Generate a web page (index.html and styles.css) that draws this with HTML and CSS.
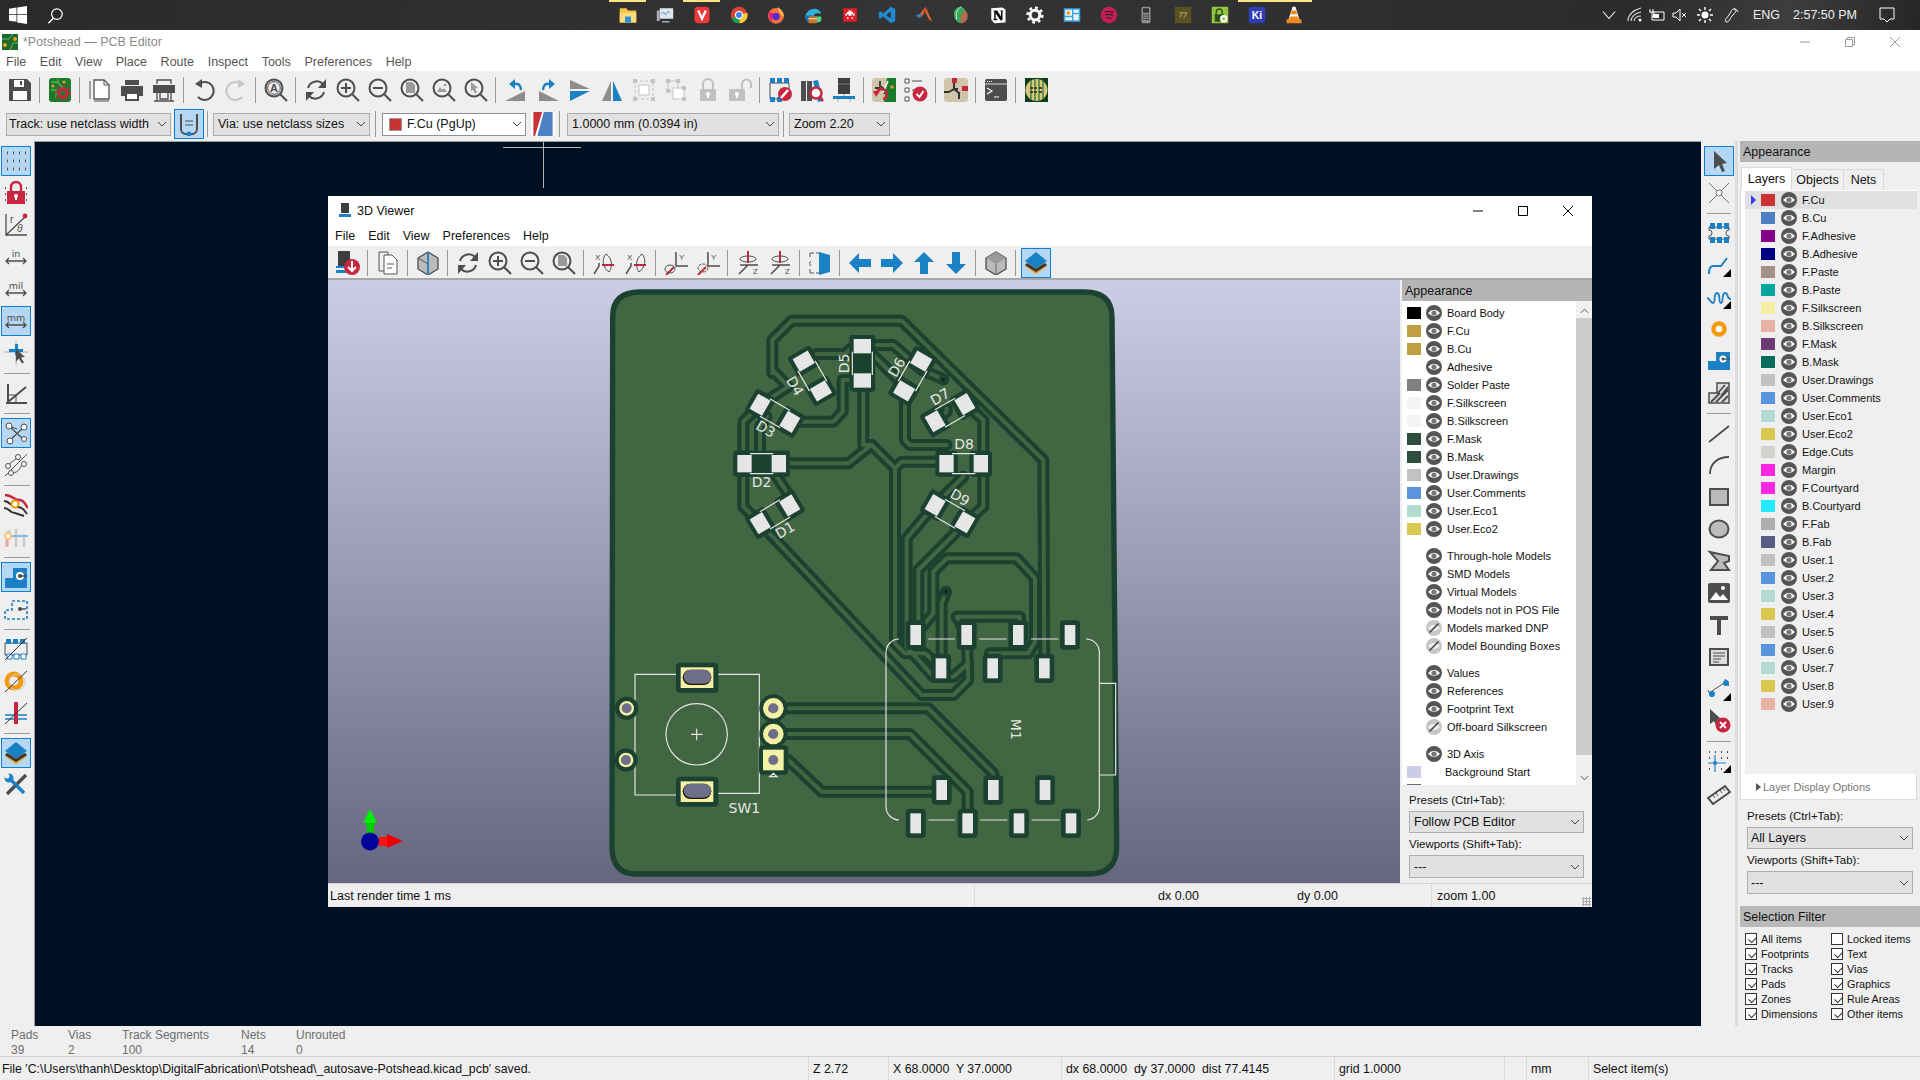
FILE: index.html
```html
<!DOCTYPE html>
<html lang="en">
<head>
<meta charset="utf-8">
<title>Potshead — PCB Editor</title>
<link rel="stylesheet" href="styles.css">
</head>
<body>
<svg class="defs" width="0" height="0" aria-hidden="true">
<defs>
<symbol id="track-ic" viewBox="0 0 24 24"><path d="M4 2v15a5 5 0 0 0 5 5h6a5 5 0 0 0 5-5V2" fill="none" stroke="#4d4d4d" stroke-width="2"/><path d="M8 9h8M8 13h8" stroke="#4d4d4d"/><circle cx="12" cy="22" r="2.500" fill="#1a81c4"/></symbol>
<symbol id="save" viewBox="0 0 24 24"><path fill="#4d4d4d" d="M1 1h18l4 4v18H1z"/><path fill="#fff" d="M6 2h10v7H6zM5 13h14v9H5z"/><path fill="#4d4d4d" d="M12 3h2v4h-2z"/></symbol>
<symbol id="setup" viewBox="0 0 24 24"><rect x="1" width="22" height="24" rx="3" fill="#187a2b"/><path d="M3 4h6l6 6M10 1v3M3 12h5v8" fill="none" stroke="#5fb05f" stroke-width="1.3"/><circle cx="5" cy="8" r="1.6" fill="#e3a21a"/><circle cx="16" cy="4" r="1.6" fill="#e3a21a"/><circle cx="15" cy="15" r="4" fill="none" stroke="#c8263f" stroke-width="3"/><circle cx="15" cy="15" r="7" fill="none" stroke="#c8263f" stroke-width="2" stroke-dasharray="2.4 3"/></symbol>
<symbol id="page" viewBox="0 0 24 24"><path d="M6 2h10l5 5v14H6z" fill="#fff" stroke="#555" stroke-width="1.3"/><path d="M16 2v5h5M2 3v18M6 23h15" fill="none" stroke="#555"/></symbol>
<symbol id="print" viewBox="0 0 24 24"><path fill="#4d4d4d" d="M5 2h14v5H5zM1 8h22v10h-4v-4H5v4H1z"/><path d="M6 15h12v7H6z" fill="#fff" stroke="#4d4d4d" stroke-width="2"/></symbol>
<symbol id="plot" viewBox="0 0 24 24"><path fill="#4d4d4d" d="M1 7h22v8H1z"/><path d="M5 6V2h14v4M5 15v8M19 15v8M2 23h20M8 15v6h8v-6" fill="none" stroke="#4d4d4d" stroke-width="1.3"/></symbol>
<symbol id="undo" viewBox="0 0 24 24"><path d="M7 6a9 9 0 1 1-1 13" fill="none" stroke="#4d4d4d" stroke-width="2"/><path d="M10 1v9L3 6z" fill="#4d4d4d"/></symbol>
<symbol id="redo" viewBox="0 0 24 24"><path d="M17 6a9 9 0 1 0 1 13" fill="none" stroke="#c6c6c6" stroke-width="2"/><path d="M14 1v9l7-4z" fill="#c6c6c6"/></symbol>
<symbol id="mag" viewBox="0 0 24 24"><circle cx="10" cy="10" r="8.5" fill="none" stroke="#4d4d4d" stroke-width="2"/><path d="M16 16l7 7" stroke="#4d4d4d" stroke-width="2"/></symbol>
<symbol id="find" viewBox="0 0 24 24"><use href="#mag"/><circle cx="10" cy="10" r="6.3" fill="none" stroke="#4d4d4d"/><text x="10" y="14" class="it it-find">A</text></symbol>
<symbol id="refresh" viewBox="0 0 24 24"><path d="M4 10a9 9 0 0 1 15-4M20 14a9 9 0 0 1-15 4" fill="none" stroke="#4d4d4d" stroke-width="2"/><path d="M22 1v9h-8zM2 23v-9h8z" fill="#4d4d4d"/></symbol>
<symbol id="zin" viewBox="0 0 24 24"><use href="#mag"/><path d="M10 5v10M5 10h10" stroke="#4d4d4d" stroke-width="2"/></symbol>
<symbol id="zout" viewBox="0 0 24 24"><use href="#mag"/><path d="M5 10h10" stroke="#4d4d4d" stroke-width="2"/></symbol>
<symbol id="zfit" viewBox="0 0 24 24"><use href="#mag"/><path d="M6 4h6l3 3v8H6z" fill="#9a9a9a"/></symbol>
<symbol id="zobj" viewBox="0 0 24 24"><use href="#mag"/><path d="M5 14l3-5 2 3 2-2 3 4z" fill="#9a9a9a"/><circle cx="13" cy="7" r="1.3" fill="#9a9a9a"/></symbol>
<symbol id="zsel" viewBox="0 0 24 24"><use href="#mag"/><path d="M7 4l7 6-3 .6 2 4-2 .8-2-4-2 2z" fill="#9a9a9a"/></symbol>
<symbol id="rccw" viewBox="0 0 24 24"><path d="M1 23l20-10v10z" fill="#8d8d8d"/><path d="M17 12C17 7 14 5 10 6" fill="none" stroke="#1a81c4" stroke-width="2.4"/><path d="M11 1L5 6l6 5z" fill="#1a81c4"/></symbol>
<symbol id="rcw" viewBox="0 0 24 24"><path d="M23 23L3 13v10z" fill="#8d8d8d"/><path d="M7 12c0-5 3-7 7-6" fill="none" stroke="#1a81c4" stroke-width="2.4"/><path d="M13 1l6 5-6 5z" fill="#1a81c4"/></symbol>
<symbol id="flip" viewBox="0 0 24 24"><path d="M2 2l20 9H2z" fill="#8d8d8d"/><path d="M2 13h20L2 23z" fill="#1a81c4"/></symbol>
<symbol id="mirror" viewBox="0 0 24 24"><path d="M11 3L2 23h9z" fill="#8d8d8d"/><path d="M13 3v20h9z" fill="#1a81c4"/></symbol>
<symbol id="grp" viewBox="0 0 24 24"><path d="M3 3h18v18H3z" fill="none" stroke="#c4c4c4" stroke-dasharray="3 2"/><rect x="7" y="7" width="10" height="10" fill="#fff" stroke="#c4c4c4"/><path d="M1 1h4v4H1zM19 1h4v4h-4zM1 19h4v4H1zM19 19h4v4h-4z" fill="#c4c4c4"/></symbol>
<symbol id="ungrp" viewBox="0 0 24 24"><path d="M4 3h10v10H4z" fill="none" stroke="#c4c4c4"/><rect x="9" y="10" width="11" height="11" fill="#fff" stroke="#c4c4c4"/><path d="M2 1h4v4H2zM12 1h4v4h-4zM2 11h4v4H2zM18 8h4v4h-4zM18 19h4v4h-4z" fill="#c4c4c4"/></symbol>
<symbol id="lock" viewBox="0 0 24 24"><path d="M7 11V6a5 5 0 0 1 10 0v5" fill="none" stroke="#c0c0c0" stroke-width="2"/><path d="M4 11h16v12H4z" fill="#c0c0c0"/><circle cx="12" cy="16" r="2" fill="#fff"/><path d="M11 16h2v4h-2z" fill="#fff"/></symbol>
<symbol id="unlock" viewBox="0 0 24 24"><path d="M14 11V6a4.500 4.500 0 0 1 9 0v4" fill="none" stroke="#c0c0c0" stroke-width="2"/><path d="M1 11h16v12H1z" fill="#c0c0c0"/><circle cx="9" cy="16" r="2" fill="#fff"/><path d="M8 16h2v4H8z" fill="#fff"/></symbol>
<symbol id="fped" viewBox="0 0 24 24"><path d="M2 5h19v16H2z" fill="none" stroke="#4d4d4d"/><path d="M2 0h5v5H2zM9 0h5v5H9zM16 0h5v5h-5zM2 19h5v5H2zM9 19h5v5H9z" fill="#1a81c4"/><circle cx="17" cy="16" r="7" fill="#c8263f"/><path d="M13 20l7-8" stroke="#fff" stroke-width="2.500"/></symbol>
<symbol id="lib" viewBox="0 0 24 24"><path d="M1 3h5v20H1zM7 3h5v20H7z" fill="#4d4d4d"/><path d="M13 3l5-1 5 21-5 1z" fill="#1a81c4"/><circle cx="16" cy="15" r="5.500" fill="#fff" stroke="#c8263f" stroke-width="2.500"/><path d="M20 19l3 4" stroke="#c8263f" stroke-width="2.500"/></symbol>
<symbol id="chip3d" viewBox="0 0 24 24"><path d="M6 0h12v16H6z" fill="#3d3d3d"/><path d="M6 6h12" stroke="#777"/><path d="M1 18h22v3H1z" fill="#1a81c4"/><path d="M6 21v3M18 21v3M12 16v2" stroke="#aaa"/></symbol>
<symbol id="netup" viewBox="0 0 24 24"><rect width="24" height="24" rx="3" fill="#d0c5a8"/><path d="M15 0h9v24H12z" fill="#187a2b"/><path d="M8 3v5l4 3v5M3 10h5" stroke="#333" stroke-width="1.800" fill="none"/><path d="M16 3l-5 12" stroke="#fff" stroke-width="1.500"/><circle cx="20" cy="9" r="1.800" fill="#e3a21a"/><path d="M11 21a5 5 0 1 0-6-6" fill="none" stroke="#c8263f" stroke-width="2.500"/><path d="M1 13h7l-4 6z" fill="#c8263f"/></symbol>
<symbol id="check" viewBox="0 0 24 24"><path d="M1 1h4v4H1zM1 10h4v4H1zM1 19h4v4H1z" fill="#fff" stroke="#4d4d4d"/><path d="M8 3h10M8 12h3" stroke="#4d4d4d"/><circle cx="16" cy="16" r="7.500" fill="#c8263f"/><path d="M12.500 16l3 3 4-6" fill="none" stroke="#fff" stroke-width="2"/></symbol>
<symbol id="sch" viewBox="0 0 24 24"><rect width="24" height="24" rx="3" fill="#d0c5a8"/><path d="M10 5v6l-5 3M10 11l5 4v6M0 14h5M10 11h4" stroke="#333" stroke-width="2" fill="none"/><path d="M8 0h5v5H8zM18 8h6v5h-6z" fill="#c8263f"/></symbol>
<symbol id="term" viewBox="0 0 24 24"><rect x="1" y="1" width="22" height="22" rx="2" fill="#4d4d4d"/><path d="M1 6h22" stroke="#fff" stroke-width=".8"/><path d="M3 3.500h1M5 3.500h1M7 3.500h1" stroke="#fff"/><path d="M3 10l5 3-5 3M10 19h5" fill="none" stroke="#fff" stroke-width="1.200"/></symbol>
<symbol id="pat" viewBox="0 0 24 24"><rect x="1" width="23" height="24" fill="#0f3d1f"/><circle cx="12.500" cy="12" r="11" fill="#d6c77c"/><path d="M7 2v20M11 1v22M15 1v22M19 3v18" stroke="#3f7f3f" stroke-width="1.400"/><path d="M6 10h3M10 10h3M15 10h3M6 14h3M10 14h3M15 14h3" stroke="#222" stroke-width="1.400"/></symbol>

<symbol id="grid" viewBox="0 0 24 24"><path d="M3 4h1M9 4h1M15 4h1M21 4h1M3 12h1M9 12h1M15 12h1M21 12h1M3 20h1M9 20h1M15 20h1M21 20h1" stroke="#555" stroke-width="3" /></symbol>
<symbol id="gridlock" viewBox="0 0 24 24"><path d="M1 7h1M22 7h1M1 13h1M22 13h1M1 19h1M22 19h1" stroke="#555" stroke-width="2"/><path d="M7 10V6a5 5 0 0 1 10 0v4" fill="none" stroke="#c8263f" stroke-width="2.400"/><path d="M3 10h18v13H3z" fill="#c8263f"/><circle cx="12" cy="15" r="2" fill="#fff"/><path d="M11 15h2v4h-2z" fill="#fff"/></symbol>
<symbol id="polar" viewBox="0 0 24 24"><path d="M2 1v21h21M2 22L21 4" fill="none" stroke="#4d4d4d" stroke-width="1.300"/><circle cx="21" cy="3" r="2.400" fill="#c8263f"/><text x="6" y="10" class="it it-s">r</text><text x="13" y="19" class="it it-s it-i">θ</text></symbol>
<symbol id="uin" viewBox="0 0 24 24"><text x="12" y="12" class="it it-u">in</text><path d="M2 16h20M5 13l-3 3 3 3M19 13l3 3-3 3" fill="none" stroke="#4d4d4d" stroke-width="1.300"/></symbol>
<symbol id="umil" viewBox="0 0 24 24"><text x="12" y="12" class="it it-u">mil</text><path d="M2 16h20M5 13l-3 3 3 3M19 13l3 3-3 3" fill="none" stroke="#4d4d4d" stroke-width="1.300"/></symbol>
<symbol id="umm" viewBox="0 0 24 24"><text x="12" y="12" class="it it-u">mm</text><path d="M2 16h20M5 13l-3 3 3 3M19 13l3 3-3 3" fill="none" stroke="#4d4d4d" stroke-width="1.300"/></symbol>
<symbol id="cross" viewBox="0 0 24 24"><path d="M12 0v24M0 11h24" stroke="#aaa"/><path d="M11 3h3v5h5v3h-5v3h-3v-3H5V8h6z" fill="#1a81c4"/><path d="M12 8l9 8-4 .6 3 5-2 1-3-5-3 3z" fill="#4d4d4d"/></symbol>
<symbol id="angle" viewBox="0 0 24 24"><path d="M2 22h21M4 23V3M4 21L22 6" fill="none" stroke="#4d4d4d" stroke-width="2"/><path d="M4 14h8v8" fill="none" stroke="#4d4d4d"/></symbol>
<symbol id="rats" viewBox="0 0 24 24"><path d="M5 5l15 14M5 20L20 6M5 5l8 3" stroke="#4d4d4d" stroke-width="1.200"/><g fill="#fff" stroke="#4d4d4d"><circle cx="5" cy="5" r="3"/><circle cx="20" cy="6" r="3"/><circle cx="6" cy="20" r="3"/><circle cx="20" cy="18" r="2.500"/></g></symbol>
<symbol id="rats2" viewBox="0 0 24 24"><path d="M1 23L23 1" stroke="#4d4d4d"/><path d="M4 12l9-7M8 20c8 0 8-8 12-9" fill="none" stroke="#4d4d4d"/><g fill="#fff" stroke="#4d4d4d"><circle cx="4" cy="13" r="2.500"/><circle cx="14" cy="4" r="2.500"/><circle cx="7" cy="20" r="2.500"/><circle cx="20" cy="11" r="2.500"/></g></symbol>
<symbol id="hilite" viewBox="0 0 24 24"><path d="M1 2c8 0 8 5 14 5s6 5 9 8" fill="none" stroke="#c8263f" stroke-width="2.500"/><path d="M0 8c6 0 7 6 12 6s7 1 11 7M0 15c6 0 5 5 11 5l9 3" fill="none" stroke="#333" stroke-width="2"/><circle cx="11" cy="11" r="3.500" fill="#fff" stroke="#f39a0b" stroke-width="2"/></symbol>
<symbol id="contrast" viewBox="0 0 24 24"><path d="M3 22V10c0-3 2-4 4-4M12 22V4M20 22V9" fill="none" stroke="#ccc" stroke-width="2.600"/><path d="M8 11h16" stroke="#8cb9dc" stroke-width="2"/><path d="M3 22v-7" stroke="#eaa" stroke-width="3"/><circle cx="4" cy="11" r="3" fill="#fff" stroke="#f5c47a" stroke-width="2"/></symbol>
<symbol id="padfill" viewBox="0 0 24 24"><path d="M1 23V13h8V3h14v20z" fill="#1a81c4"/><circle cx="16" cy="11" r="4" fill="#fff"/><circle cx="16" cy="11" r="2" fill="#4d4d4d"/><path d="M16 11h7" stroke="#4d4d4d" stroke-width="1.500"/></symbol>
<symbol id="padline" viewBox="0 0 24 24"><path d="M1 22V13h7V4h15v18z" fill="none" stroke="#1a81c4" stroke-width="1.600" stroke-dasharray="3 2"/><circle cx="16" cy="12" r="2" fill="#4d4d4d"/><path d="M16 12h6" stroke="#4d4d4d" stroke-width="1.500"/></symbol>
<symbol id="fpline" viewBox="0 0 24 24"><path d="M1 6h22v12H1z" fill="none" stroke="#4d4d4d"/><path d="M2 2h5v5H2zM9 2h5v5H9zM16 2h5v5h-5z" fill="#1a81c4"/><path d="M3 17h5v5H3zM10 17h5v5h-5zM17 17h5v5h-5z" fill="#fff" stroke="#1a81c4"/><path d="M1 23L23 1" stroke="#333"/></symbol>
<symbol id="viasl" viewBox="0 0 24 24"><circle cx="10" cy="12" r="7" fill="none" stroke="#f39a0b" stroke-width="5"/><circle cx="13" cy="13" r="8" fill="none" stroke="#ccc"/><path d="M1 23L23 2" stroke="#333"/></symbol>
<symbol id="trsl" viewBox="0 0 24 24"><path d="M1 14h22M1 18h22" stroke="#1a81c4" stroke-width="1.500"/><path d="M12 1v22" stroke="#c8263f" stroke-width="4"/><path d="M1 23L23 2" stroke="#333"/></symbol>
<symbol id="layers" viewBox="0 0 24 24"><path d="M12 7l11 8-11 8L1 15z" fill="#f39a0b"/><path d="M12 1l11 9-11 8L1 10z" fill="#1a81c4"/><path d="M3 12l9 6 9-6 2 2-11 7-11-7z" fill="#333"/></symbol>
<symbol id="tools" viewBox="0 0 24 24"><path d="M22 2L3 21" stroke="#4d4d4d" stroke-width="3.400"/><path d="M3 3l17 17" stroke="#1a81c4" stroke-width="3.400"/><circle cx="5" cy="5" r="4.500" fill="#1a81c4"/><circle cx="3" cy="3" r="2.500" fill="#efefef"/></symbol>

<symbol id="pointer" viewBox="0 0 24 24"><path d="M7 2l13 12-5 1 3 7-3 1-3-7-5 4z" fill="#4d4d4d"/></symbol>
<symbol id="xhair" viewBox="0 0 24 24"><path d="M2 2l20 20M22 2L2 22" stroke="#777"/><circle cx="12" cy="12" r="3" fill="#fff" stroke="#777"/></symbol>
<symbol id="tri" viewBox="0 0 24 24"><path d="M24 16v8h-8z" fill="#000"/></symbol>
<symbol id="fp" viewBox="0 0 24 24"><path d="M2 6h20v3a3 3 0 0 0 0 6v3H2v-3a3 3 0 0 0 0-6z" fill="none" stroke="#4d4d4d"/><path d="M3 2h5v6H3zM10 2h5v6h-5zM17 2h5v6h-5zM3 16h5v6H3zM10 16h5v6h-5zM17 16h5v6h-5z" fill="#1a81c4"/></symbol>
<symbol id="route" viewBox="0 0 24 24"><path d="M2 21c0-6 1-8 5-8h7l6-8" fill="none" stroke="#1a81c4" stroke-width="2"/><use href="#tri"/></symbol>
<symbol id="mean" viewBox="0 0 24 24"><path d="M0 13c3 0 3 5 6 5s0-10 4-10 1 10 4 10 0-10 4-10 1 6 6 6" fill="none" stroke="#1a81c4" stroke-width="1.800"/><use href="#tri"/></symbol>
<symbol id="via" viewBox="0 0 24 24"><circle cx="12" cy="12" r="5.500" fill="#fff" stroke="#f39a0b" stroke-width="4.500"/></symbol>
<symbol id="zonepad" viewBox="0 0 24 24"><path d="M1 21V12h8V3h14v18z" fill="#1a81c4"/><circle cx="16" cy="10" r="3.500" fill="#fff"/><circle cx="16" cy="10" r="1.500" fill="#4d4d4d"/><path d="M16 10h7" stroke="#4d4d4d" stroke-width="1.300"/></symbol>
<symbol id="hatch" viewBox="0 0 24 24"><path d="M2 22V12h8V2h12v20z" fill="#ddd" stroke="#4d4d4d" stroke-width="1.500"/><path d="M4 21l9-9M9 21l12-12M15 21l6-6M10 13l8-9M14 15l7-9" stroke="#4d4d4d" stroke-width="1.800"/></symbol>
<symbol id="line" viewBox="0 0 24 24"><path d="M2 21L22 5" stroke="#4d4d4d" stroke-width="1.800"/></symbol>
<symbol id="arc" viewBox="0 0 24 24"><path d="M3 21C3 11 10 4 22 4" fill="none" stroke="#4d4d4d" stroke-width="1.800"/></symbol>
<symbol id="rect" viewBox="0 0 24 24"><rect x="3" y="4" width="18" height="16" fill="#bbb" stroke="#4d4d4d" stroke-width="2"/></symbol>
<symbol id="circ" viewBox="0 0 24 24"><ellipse cx="12" cy="12" rx="9.500" ry="8.500" fill="#bbb" stroke="#4d4d4d" stroke-width="2"/></symbol>
<symbol id="poly" viewBox="0 0 24 24"><path d="M3 3L22 7v5l-5 2 5 7H4l7-9z" fill="#bbb" stroke="#4d4d4d" stroke-width="2"/></symbol>
<symbol id="img" viewBox="0 0 24 24"><rect x="1" y="2" width="22" height="20" rx="2" fill="#4d4d4d"/><path d="M3 19l6-8 4 5 3-3 5 6z" fill="#fff"/><circle cx="16" cy="7" r="2" fill="#fff"/></symbol>
<symbol id="txt" viewBox="0 0 24 24"><path d="M3 3h18v4h-7v15h-4V7H3z" fill="#4d4d4d"/></symbol>
<symbol id="tbox" viewBox="0 0 24 24"><rect x="3" y="4" width="18" height="16" fill="#ddd" stroke="#4d4d4d" stroke-width="2"/><path d="M6 8h12M6 11h12M6 14h8M6 17h6" stroke="#4d4d4d"/></symbol>
<symbol id="dim" viewBox="0 0 24 24"><path d="M2 16L20 4M4 20l-3-7M22 9l-4-7" stroke="#4d4d4d"/><circle cx="19" cy="6" r="3" fill="#1a81c4"/><circle cx="5" cy="17" r="3" fill="#1a81c4"/><use href="#tri"/></symbol>
<symbol id="del" viewBox="0 0 24 24"><path d="M3 0l11 10-4 1 2 6-2 1-3-6-4 3z" fill="#4d4d4d"/><circle cx="16" cy="16" r="7.500" fill="#c8263f"/><path d="M13 13l6 6M19 13l-6 6" stroke="#fff" stroke-width="1.800"/></symbol>
<symbol id="gridor" viewBox="0 0 24 24"><path d="M2 3h1M8 3h1M14 3h1M20 3h1M2 9h1M14 9h1M20 9h1M2 20h1M14 20h1" stroke="#4d4d4d" stroke-width="2"/><path d="M1 14h18M8 6v17" stroke="#1a81c4" stroke-width="1.200"/><circle cx="8" cy="14" r="2" fill="#1a81c4"/><use href="#tri"/></symbol>
<symbol id="ruler" viewBox="0 0 24 24"><path d="M1 17L18 5l5 6L6 23z" fill="none" stroke="#4d4d4d" stroke-width="2"/><path d="M6 14l2 3M9 12l2 3M13 9l2 3M16 7l2 3" stroke="#4d4d4d"/></symbol>

<symbol id="v-save" viewBox="0 0 24 24"><path d="M2 0h12v17H2z" fill="#3d3d3d"/><path d="M0 15h12v2H0zM0 19h14v3H0z" fill="#1a81c4"/><circle cx="16" cy="16" r="8" fill="#c8263f"/><path d="M16 10v10M12 16l4 4 4-4" fill="none" stroke="#fff" stroke-width="2"/></symbol>
<symbol id="v-copy" viewBox="0 0 24 24"><path d="M3 1h9v19H3z" fill="none" stroke="#555"/><path d="M8 4h8l5 5v14H8z" fill="#fff" stroke="#555"/><path d="M11 13h7M11 17h5" stroke="#555"/></symbol>
<symbol id="cube" viewBox="0 0 24 24"><path d="M12 1l10 6v11l-10 6-10-6V7z" fill="#bbb" stroke="#4d4d4d" stroke-width="1.300"/><path d="M12 1v23" stroke="#1a81c4" stroke-width="1.800"/><path d="M2 7l10 6" stroke="#555"/></symbol>
<symbol id="cube2" viewBox="0 0 24 24"><path d="M12 1l10 6v11l-10 6-10-6V7z" fill="#bbb" stroke="#4d4d4d" stroke-width="1.300"/><path d="M12 1l10 6-10 6L2 7z" fill="#999"/><path d="M12 13v11" stroke="#666"/></symbol>
<symbol id="rx1" viewBox="0 0 24 24"><text x="3" y="9" class="it it-a">X</text><path d="M7 12v3L2 23" fill="none" stroke="#4d4d4d" stroke-width="1.500"/><path d="M10 14h12" stroke="#c8263f" stroke-width="2"/><path d="M14 3c-5 5-3 14 3 18 4-6 3-14-3-18z" fill="none" stroke="#4d4d4d"/></symbol>
<symbol id="rx2" viewBox="0 0 24 24"><text x="3" y="9" class="it it-a">X</text><path d="M7 12v3L2 23" fill="none" stroke="#4d4d4d" stroke-width="1.500"/><path d="M10 14h12" stroke="#c8263f" stroke-width="2"/><path d="M18 3c5 5 3 14-3 18-4-6-3-14 3-18z" fill="none" stroke="#4d4d4d"/></symbol>
<symbol id="ry1" viewBox="0 0 24 24"><text x="15" y="9" class="it it-a">Y</text><path d="M12 1v14h12" fill="none" stroke="#4d4d4d" stroke-width="1.500"/><path d="M10 16l-8 8" stroke="#c8263f" stroke-width="2"/><ellipse cx="6" cy="18" rx="5" ry="4" fill="none" stroke="#4d4d4d"/></symbol>
<symbol id="ry2" viewBox="0 0 24 24"><text x="15" y="9" class="it it-a">Y</text><path d="M12 1v14h12" fill="none" stroke="#4d4d4d" stroke-width="1.500"/><path d="M10 16l-8 8" stroke="#c8263f" stroke-width="2"/><ellipse cx="7" cy="17" rx="5" ry="4" fill="none" stroke="#4d4d4d" stroke-dasharray="3 1"/></symbol>
<symbol id="rz1" viewBox="0 0 24 24"><text x="17" y="23" class="it it-a">Z</text><path d="M12 0v12" stroke="#c8263f" stroke-width="2"/><path d="M4 14h18M12 14L3 23" stroke="#4d4d4d" stroke-width="1.500"/><ellipse cx="12" cy="8" rx="8" ry="3" fill="none" stroke="#4d4d4d"/></symbol>
<symbol id="fb" viewBox="0 0 24 24"><path d="M11 1l11 3v17l-11 3z" fill="#1a81c4"/><path d="M2 2h4M2 2v4M2 22h4M2 22v-4M3 10a3 3 0 0 0 0 5" stroke="#555" fill="none"/><path d="M8 2h3M8 22h3" stroke="#555"/></symbol>
<symbol id="al" viewBox="0 0 24 24"><path d="M1 12L11 2v6h12v8H11v6z" fill="#1a81c4"/></symbol>
<symbol id="ar" viewBox="0 0 24 24"><path d="M23 12L13 2v6H1v8h12v6z" fill="#1a81c4"/></symbol>
<symbol id="au" viewBox="0 0 24 24"><path d="M12 1L2 11h6v12h8V11h6z" fill="#1a81c4"/></symbol>
<symbol id="ad" viewBox="0 0 24 24"><path d="M12 23L2 13h6V1h8v12h6z" fill="#1a81c4"/></symbol>

<symbol id="eye" viewBox="0 0 16 16"><circle cx="8" cy="8" r="8" fill="#555"/><path d="M2 8q6-6.500 12 0q-6 6.500-12 0z" fill="#fff"/><circle cx="8" cy="8" r="2.600" fill="#777"/></symbol>
<symbol id="eyeoff" viewBox="0 0 16 16"><circle cx="8" cy="8" r="8" fill="#c6c6c6"/><path d="M2 8q6-6.500 12 0q-6 6.500-12 0z" fill="#eee"/><path d="M3.500 12.500l9-9" stroke="#444" stroke-width="1.600"/></symbol>
<symbol id="chev" viewBox="0 0 10 6"><path d="M1 1l4 4 4-4" fill="none" stroke="#444"/></symbol>

<symbol id="t-win" viewBox="0 0 24 24"><path fill="#fff" d="M0 3.500l10-1.400V11H0zM11 2l13-2v11H11zM0 12h10v9L0 19.600zM11 12h13v12l-13-2z"/></symbol>
<symbol id="t-search" viewBox="0 0 24 24"><circle cx="14" cy="10" r="7.500" fill="none" stroke="#fff" stroke-width="1.800"/><path d="M9 16l-7 7" stroke="#fff" stroke-width="2"/></symbol>
<symbol id="t-exp" viewBox="0 0 24 24"><path d="M1 3h9l2 3h11v16H1z" fill="#f6c344"/><path d="M1 9h22v13H1z" fill="#ffdc7a"/><path d="M8 14h8v8H8z" fill="#2a8fd6"/></symbol>
<symbol id="t-mon" viewBox="0 0 24 24"><path d="M5 3h18v14H5z" fill="#dfe6ee"/><path d="M7 11l3-3 3 4 3-5 3 3" fill="none" stroke="#2d7fc1"/><path d="M1 6h4v14H1zM8 20h10v2H8z" fill="#aab"/></symbol>
<symbol id="t-viv" viewBox="0 0 24 24"><rect x="2" y="1" width="20" height="22" rx="5" fill="#ef3939"/><path d="M7 6l5 11 5-11" fill="none" stroke="#fff" stroke-width="3"/></symbol>
<symbol id="t-chr" viewBox="0 0 24 24"><circle cx="12" cy="12" r="11" fill="#db4437"/><path d="M12 12L2 17a11 11 0 0 0 11 6z" fill="#0f9d58"/><path d="M12 12l11-3a11 11 0 0 1-10 14z" fill="#fcc934"/><circle cx="12" cy="12" r="5.500" fill="#fff"/><circle cx="12" cy="12" r="4" fill="#4285f4"/></symbol>
<symbol id="t-ff" viewBox="0 0 24 24"><circle cx="12" cy="13" r="10.500" fill="#ff7139"/><path d="M15 1c2 4 8 6 7 14-3-4-8-7-7-14z" fill="#ffbd4f"/><path d="M4 8a10 10 0 0 0 5 14c-4-4-3-9 0-11z" fill="#e31587"/><circle cx="12" cy="14" r="5" fill="#592acb"/></symbol>
<symbol id="t-edge" viewBox="0 0 24 24"><path d="M2 14C2 4 20-2 23 11c-4-3-10-1-10 2H2z" fill="#2fb3d9"/><path d="M1 13c0 8 8 11 13 9l-4-9z" fill="#1272b8"/><path d="M10 14h13v6c0 2-13 3-13 0z" fill="#59d08c"/><path d="M6 14h11v9H6z" fill="#c8792a"/><path d="M6 17h11" stroke="#fff"/></symbol>
<symbol id="t-inv" viewBox="0 0 24 24"><path d="M3 3h18v18H3z" fill="#e31c2c"/><path d="M10 6h4v2h2v2h2v3h-2v-2h-2v2h-4v-2H8v2H6v-3h2V8h2zM8 15h2v2H8zM14 15h2v2h-2z" fill="#fff"/></symbol>
<symbol id="t-vs" viewBox="0 0 24 24"><path d="M17 1l6 3v16l-6 3-10-9-4 3-2-1V8l2-1 4 3zM17 7l-6 5 6 5z" fill="#1f8ad2"/></symbol>
<symbol id="t-mat" viewBox="0 0 24 24"><path d="M1 13l6-3 3 3-4 3z" fill="#3b7fc4"/><path d="M7 10l7-9 9 20-5-4-4-9-4 5z" fill="#e16737"/><path d="M14 1l-4 12 4-5z" fill="#a8321d"/></symbol>
<symbol id="t-dav" viewBox="0 0 24 24"><path d="M12 1C5 1 1 7 3 14c1 5 5 9 9 9 0-8 0-14 6-17-2-3-4-5-6-5z" fill="#3aa85a"/><path d="M18 6c3 3 4 8 2 12-2 3-5 5-8 5-1-6 0-14 6-17z" fill="#b86b4f"/><path d="M12 1c-5 3-7 8-6 17" fill="none" stroke="#fff"/></symbol>
<symbol id="t-not" viewBox="0 0 24 24"><path d="M3 3l15-1 4 3v17l-15 1-4-5z" fill="#fff"/><path d="M6 6h5l5 8V7h-1V6h4v1h-1v12h-3l-6-9v7h2v2H6v-2h1V7H6z" fill="#111"/></symbol>
<symbol id="t-gear" viewBox="0 0 24 24"><circle cx="12" cy="12" r="6.500" fill="none" stroke="#fff" stroke-width="4"/><circle cx="12" cy="12" r="10" fill="none" stroke="#fff" stroke-width="3" stroke-dasharray="3.800 4"/></symbol>
<symbol id="t-tile" viewBox="0 0 24 24"><path d="M1 3h22v18H1z" fill="#3da7e6"/><path d="M3 5h9v8H3zM14 5h7v4h-7zM14 11h7v8h-7zM3 15h9v4H3z" fill="#e9f3fa"/><circle cx="7" cy="9" r="2.500" fill="#f39a0b"/></symbol>
<symbol id="t-spo" viewBox="0 0 24 24"><circle cx="12" cy="12" r="11" fill="#c61e54"/><path d="M6 8c4-1 8-1 12 1M7 12c3-1 7-1 10 1M8 16c3-1 5 0 8 1" fill="none" stroke="#222" stroke-width="1.600"/></symbol>
<symbol id="t-calc" viewBox="0 0 24 24"><rect x="6" y="1" width="12" height="22" rx="2" fill="#8e8e8e"/><path d="M8 3h8v6H8z" fill="#333"/><path d="M8 12h2M11 12h2M14 12h2M8 15h2M11 15h2M14 15h2M8 18h2M11 18h2M14 18h2" stroke="#222" stroke-width="1.600"/></symbol>
<symbol id="t-oli" viewBox="0 0 24 24"><path d="M1 1h22v22H1z" fill="#5b5223"/><path d="M7 9h10l-4 7M11 9l-3 6" fill="none" stroke="#a79c60" stroke-width="1.500"/></symbol>
<symbol id="t-lock" viewBox="0 0 24 24"><path d="M1 1h22v22H1z" fill="#8fc73e"/><path d="M7 11V8a4 4 0 0 1 8 0v3" fill="none" stroke="#2f4d1d" stroke-width="1.800"/><path d="M5 11h12v10H5z" fill="#2f4d1d"/><circle cx="17" cy="17" r="5" fill="#fff"/><circle cx="17" cy="17" r="2" fill="#8fc73e"/></symbol>
<symbol id="t-ki" viewBox="0 0 24 24"><rect x="1" y="1" width="22" height="22" rx="4" fill="#2f3fb3"/><text x="12" y="17" class="it it-ki">Ki</text></symbol>
<symbol id="t-vlc" viewBox="0 0 24 24"><path d="M10 1h4l6 19H4z" fill="#f5f5f5"/><path d="M9 6h6l1.500 5h-9zM6.500 14h11l1.500 6H5z" fill="#f08a1d"/><path d="M2 18h20v5H2z" fill="#f08a1d"/></symbol>
<symbol id="t-chv" viewBox="0 0 16 16"><path d="M1 4l7 8 7-8" fill="none" stroke="#fff" stroke-width="1.200"/></symbol>
<symbol id="t-wifi" viewBox="0 0 16 16"><path d="M1 14C1 8 6 3 14 1M4 14c0-4 4-8 10-9M7 14c0-3 3-5 7-5" fill="none" stroke="#ddd" stroke-width="1.100"/><circle cx="13" cy="13" r="1.500" fill="#fff"/></symbol>
<symbol id="t-bat" viewBox="0 0 16 16"><path d="M3 5h12v8H3z" fill="none" stroke="#fff"/><path d="M4 7h6v4H4z" fill="#fff"/><path d="M1 2v3M4 2v3M0 5h5v3l-2 2" fill="none" stroke="#fff"/></symbol>
<symbol id="t-mute" viewBox="0 0 16 16"><path d="M1 6h3l4-4v12l-4-4H1z" fill="none" stroke="#fff"/><path d="M10 6l4 4M14 6l-4 4" stroke="#fff"/></symbol>
<symbol id="t-bright" viewBox="0 0 16 16"><circle cx="8" cy="8" r="3.500" fill="#fff"/><path d="M8 0v3M8 13v3M0 8h3M13 8h3M2 2l2 2M12 12l2 2M14 2l-2 2M2 14l2-2" stroke="#fff" stroke-width="1.400"/></symbol>
<symbol id="t-pen" viewBox="0 0 16 16"><path d="M2 15c-2-2 1-4 3-7s3-7 6-6-1 5-3 7-2 6-6 6zM10 2c2 0 3 1 4 3" fill="none" stroke="#fff"/></symbol>
<symbol id="t-note" viewBox="0 0 16 16"><path d="M1 1h14v11h-4l-3 3-3-3H1z" fill="none" stroke="#fff"/></symbol>
<symbol id="w-min" viewBox="0 0 12 12"><path d="M1 6h10" stroke="currentColor"/></symbol>
<symbol id="w-max" viewBox="0 0 12 12"><path d="M1.500 1.500h9v9h-9z" fill="none" stroke="currentColor"/></symbol>
<symbol id="w-res" viewBox="0 0 12 12"><path d="M1.500 3.500h7v7h-7zM3.500 3V1.500h7v7H9" fill="none" stroke="currentColor"/></symbol>
<symbol id="w-x" viewBox="0 0 12 12"><path d="M1 1l10 10M11 1L1 11" stroke="currentColor"/></symbol>
<symbol id="app-k" viewBox="0 0 16 16"><path d="M0 0h16v16H0z" fill="#1b6b2a"/><path d="M0 5h7l4-5M16 9h-5l-3 7" fill="none" stroke="#6fb36f"/><circle cx="3" cy="11" r="2" fill="#e3a21a"/><circle cx="13" cy="5" r="2" fill="#e3a21a"/></symbol>
<symbol id="app-3d" viewBox="0 0 12 16"><path d="M2 0h8v10H2z" fill="#3d3d3d"/><path d="M0 11h12v3H0z" fill="#1a81c4"/></symbol>
</defs>
</svg>

<div class="app">
  <header class="taskbar">
    <svg class="tb-start"><use href="#t-win"/></svg>
    <svg class="tb-search"><use href="#t-search"/></svg>
    <div class="tb-apps">
      <span class="tb-app on"><svg><use href="#t-exp"/></svg></span>
      <span class="tb-app"><svg><use href="#t-mon"/></svg></span>
      <span class="tb-app on"><svg><use href="#t-viv"/></svg></span>
      <span class="tb-app"><svg><use href="#t-chr"/></svg></span>
      <span class="tb-app"><svg><use href="#t-ff"/></svg></span>
      <span class="tb-app"><svg><use href="#t-edge"/></svg></span>
      <span class="tb-app"><svg><use href="#t-inv"/></svg></span>
      <span class="tb-app"><svg><use href="#t-vs"/></svg></span>
      <span class="tb-app"><svg><use href="#t-mat"/></svg></span>
      <span class="tb-app"><svg><use href="#t-dav"/></svg></span>
      <span class="tb-app"><svg><use href="#t-not"/></svg></span>
      <span class="tb-app"><svg><use href="#t-gear"/></svg></span>
      <span class="tb-app"><svg><use href="#t-tile"/></svg></span>
      <span class="tb-app"><svg><use href="#t-spo"/></svg></span>
      <span class="tb-app"><svg><use href="#t-calc"/></svg></span>
      <span class="tb-app"><svg><use href="#t-oli"/></svg></span>
      <span class="tb-app"><svg><use href="#t-lock"/></svg></span>
      <span class="tb-app on"><svg><use href="#t-ki"/></svg></span>
      <span class="tb-app on"><svg><use href="#t-vlc"/></svg></span>
    </div>
    <div class="tray">
      <svg class="tr-i w-chv"><use href="#t-chv"/></svg>
      <svg class="tr-i w-wifi"><use href="#t-wifi"/></svg>
      <svg class="tr-i w-bat"><use href="#t-bat"/></svg>
      <svg class="tr-i w-mute"><use href="#t-mute"/></svg>
      <svg class="tr-i w-bright"><use href="#t-bright"/></svg>
      <svg class="tr-i w-pen"><use href="#t-pen"/></svg>
      <span class="tr-eng">ENG</span>
      <span class="tr-time">2:57:50 PM</span>
      <svg class="tr-i w-note"><use href="#t-note"/></svg>
    </div>
  </header>

  <div class="titlebar">
    <svg class="app-icon"><use href="#app-k"/></svg>
    <span class="title-text">*Potshead — PCB Editor</span>
    <div class="win-btns">
      <svg><use href="#w-min"/></svg><svg><use href="#w-res"/></svg><svg><use href="#w-x"/></svg>
    </div>
  </div>
  <nav class="menubar">
    <span>File</span><span>Edit</span><span>View</span><span>Place</span><span>Route</span><span>Inspect</span><span>Tools</span><span>Preferences</span><span>Help</span>
  </nav>

  <div class="toolbar">
    <div class="tbar-row hbar">
      <span class="b"><svg class="ic"><use href="#save"/></svg></span><span class="s"></span>
      <span class="b"><svg class="ic"><use href="#setup"/></svg></span><span class="s"></span>
      <span class="b"><svg class="ic"><use href="#page"/></svg></span>
      <span class="b"><svg class="ic"><use href="#print"/></svg></span>
      <span class="b"><svg class="ic"><use href="#plot"/></svg></span><span class="s"></span>
      <span class="b"><svg class="ic"><use href="#undo"/></svg></span>
      <span class="b"><svg class="ic"><use href="#redo"/></svg></span><span class="s"></span>
      <span class="b"><svg class="ic"><use href="#find"/></svg></span><span class="s"></span>
      <span class="b"><svg class="ic"><use href="#refresh"/></svg></span>
      <span class="b"><svg class="ic"><use href="#zin"/></svg></span>
      <span class="b"><svg class="ic"><use href="#zout"/></svg></span>
      <span class="b"><svg class="ic"><use href="#zfit"/></svg></span>
      <span class="b"><svg class="ic"><use href="#zobj"/></svg></span>
      <span class="b"><svg class="ic"><use href="#zsel"/></svg></span><span class="s"></span>
      <span class="b"><svg class="ic"><use href="#rccw"/></svg></span>
      <span class="b"><svg class="ic"><use href="#rcw"/></svg></span>
      <span class="b"><svg class="ic"><use href="#flip"/></svg></span>
      <span class="b"><svg class="ic"><use href="#mirror"/></svg></span>
      <span class="b"><svg class="ic"><use href="#grp"/></svg></span>
      <span class="b"><svg class="ic"><use href="#ungrp"/></svg></span>
      <span class="b"><svg class="ic"><use href="#lock"/></svg></span>
      <span class="b"><svg class="ic"><use href="#unlock"/></svg></span><span class="s"></span>
      <span class="b"><svg class="ic"><use href="#fped"/></svg></span>
      <span class="b"><svg class="ic"><use href="#lib"/></svg></span>
      <span class="b"><svg class="ic"><use href="#chip3d"/></svg></span><span class="s"></span>
      <span class="b"><svg class="ic"><use href="#netup"/></svg></span>
      <span class="b"><svg class="ic"><use href="#check"/></svg></span><span class="s"></span>
      <span class="b"><svg class="ic"><use href="#sch"/></svg></span><span class="s"></span>
      <span class="b"><svg class="ic"><use href="#term"/></svg></span><span class="s"></span>
      <span class="b"><svg class="ic"><use href="#pat"/></svg></span>
    </div>
    <div class="tbar-row2">
      <div class="sel sel-track">Track: use netclass width<svg><use href="#chev"/></svg></div>
      <span class="b on b-track"><svg class="ic"><use href="#track-ic"/></svg></span>
      <span class="s2"></span>
      <div class="sel sel-via">Via: use netclass sizes<svg><use href="#chev"/></svg></div>
      <span class="s2"></span>
      <div class="sel sel-layer"><i class="layer-sw"></i><span class="layer-name">F.Cu (PgUp)</span><svg><use href="#chev"/></svg></div>
      <svg class="pair" viewBox="0 0 24 30"><path d="M0 0h11L2 30H0z" fill="#c83434"/><path d="M13 0h11v30H5z" fill="#4d7fc4"/></svg>
      <span class="s2"></span>
      <div class="sel sel-grid">1.0000 mm (0.0394 in)<svg><use href="#chev"/></svg></div>
      <span class="s2"></span>
      <div class="sel sel-zoom">Zoom 2.20<svg><use href="#chev"/></svg></div>
    </div>
  </div>

  <div class="main">
    <div class="vbar left-bar">
      <span class="b on"><svg class="ic"><use href="#grid"/></svg></span>
      <span class="b"><svg class="ic"><use href="#gridlock"/></svg></span>
      <span class="b"><svg class="ic"><use href="#polar"/></svg></span>
      <span class="b"><svg class="ic"><use href="#uin"/></svg></span>
      <span class="b"><svg class="ic"><use href="#umil"/></svg></span>
      <span class="b on"><svg class="ic"><use href="#umm"/></svg></span>
      <span class="b"><svg class="ic"><use href="#cross"/></svg></span><span class="s"></span>
      <span class="b"><svg class="ic"><use href="#angle"/></svg></span><span class="s"></span>
      <span class="b on"><svg class="ic"><use href="#rats"/></svg></span>
      <span class="b"><svg class="ic"><use href="#rats2"/></svg></span><span class="s"></span>
      <span class="b"><svg class="ic"><use href="#hilite"/></svg></span>
      <span class="b"><svg class="ic"><use href="#contrast"/></svg></span><span class="s"></span>
      <span class="b on"><svg class="ic"><use href="#padfill"/></svg></span>
      <span class="b"><svg class="ic"><use href="#padline"/></svg></span><span class="s"></span>
      <span class="b"><svg class="ic"><use href="#fpline"/></svg></span>
      <span class="b"><svg class="ic"><use href="#viasl"/></svg></span>
      <span class="b"><svg class="ic"><use href="#trsl"/></svg></span><span class="s"></span>
      <span class="b on"><svg class="ic"><use href="#layers"/></svg></span>
      <span class="b"><svg class="ic"><use href="#tools"/></svg></span>
    </div>

    <div class="canvas">
      <i class="xh xh-v"></i><i class="xh xh-h"></i>
      <section class="viewer">
        <div class="v-title">
          <svg class="v-app"><use href="#app-3d"/></svg><span>3D Viewer</span>
          <div class="v-btns"><svg><use href="#w-min"/></svg><svg><use href="#w-max"/></svg><svg><use href="#w-x"/></svg></div>
        </div>
        <nav class="v-menu"><span>File</span><span>Edit</span><span>View</span><span>Preferences</span><span>Help</span></nav>
        <div class="v-tools hbar">
          <span class="b"><svg class="ic"><use href="#v-save"/></svg></span><span class="s"></span>
          <span class="b"><svg class="ic"><use href="#v-copy"/></svg></span><span class="s"></span>
          <span class="b"><svg class="ic"><use href="#cube"/></svg></span><span class="s"></span>
          <span class="b"><svg class="ic"><use href="#refresh"/></svg></span>
          <span class="b"><svg class="ic"><use href="#zin"/></svg></span>
          <span class="b"><svg class="ic"><use href="#zout"/></svg></span>
          <span class="b"><svg class="ic"><use href="#zfit"/></svg></span><span class="s"></span>
          <span class="b"><svg class="ic"><use href="#rx1"/></svg></span>
          <span class="b"><svg class="ic"><use href="#rx2"/></svg></span><span class="s"></span>
          <span class="b"><svg class="ic"><use href="#ry1"/></svg></span>
          <span class="b"><svg class="ic"><use href="#ry2"/></svg></span><span class="s"></span>
          <span class="b"><svg class="ic"><use href="#rz1"/></svg></span>
          <span class="b"><svg class="ic"><use href="#rz1"/></svg></span><span class="s"></span>
          <span class="b"><svg class="ic"><use href="#fb"/></svg></span><span class="s"></span>
          <span class="b"><svg class="ic"><use href="#al"/></svg></span>
          <span class="b"><svg class="ic"><use href="#ar"/></svg></span>
          <span class="b"><svg class="ic"><use href="#au"/></svg></span>
          <span class="b"><svg class="ic"><use href="#ad"/></svg></span><span class="s"></span>
          <span class="b"><svg class="ic"><use href="#cube2"/></svg></span><span class="s"></span>
          <span class="b on"><svg class="ic"><use href="#layers"/></svg></span>
        </div>
        <div class="v-body">
          <div class="v-view">
            <svg class="board" viewBox="0 0 1560 1830">
              <defs>
                <g id="tracks">
                  <polyline points="517,280 517,180 575,122 905,122 1085,300 1330,540 1333,1165"/>
                  <polyline points="517,270 565,320 480,375"/>
                  <polyline points="610,245 650,222 735,222 765,195"/>
                  <polyline points="760,300 728,300 728,395 700,425 570,425"/>
                  <polyline points="790,300 790,495 815,495 885,565 885,1090 915,1120 975,1120 1023,1165"/>
                  <polyline points="530,550 745,550 795,510 815,495"/>
                  <polyline points="885,565 905,545 1040,545"/>
                  <polyline points="480,550 480,440 500,410"/>
                  <polyline points="480,375 430,425 430,680 480,730"/>
                  <polyline points="530,590 570,650 572,680"/>
                  <polyline points="480,730 965,1245 1060,1245 1105,1200 1100,1065"/>
                  <polyline points="520,1285 985,1285 1180,1480 1180,1530"/>
                  <polyline points="520,1362 930,1362 1103,1535 1103,1630"/>
                  <polyline points="520,1440 565,1440 665,1535 1025,1535"/>
                  <polyline points="915,330 915,480 930,495 1040,495"/>
                  <polyline points="1095,370 1150,420 1150,680 1095,730"/>
                  <polyline points="1090,590 1005,675 920,775 920,1100 1000,1190 1060,1190 1105,1150"/>
                  <polyline points="1095,730 955,870 955,1065"/>
                  <polyline points="947,1065 1000,1000 1000,875 1040,835 1250,835 1305,895 1305,1085 1285,1120 1170,1120 1178,1165"/>
                  <polyline points="1038,935 1025,970 1025,1165"/>
                  <polyline points="1100,1065 1070,1010 1260,1010 1255,1065"/>
                  <polyline points="830,195 880,195 965,270 1030,298"/>
                  <polyline points="820,225 915,320"/>
                  <polyline points="1005,425 1040,395 1040,385"/>
                </g>
                <g id="led">
                  <rect x="-85" y="-39" width="68" height="78" rx="10" class="b-dark"/>
                  <rect x="17" y="-39" width="68" height="78" rx="10" class="b-dark"/>
                  <rect x="-73" y="-26" width="43" height="52" class="b-pad"/>
                  <rect x="30" y="-26" width="43" height="52" class="b-pad"/>
                  <path d="M-35-30H35M-35 30H35" class="b-silk"/>
                </g>
                <g id="pinp"><rect x="-30" y="-44" width="60" height="88" rx="12" class="b-dark"/><rect x="-16" y="-30" width="32" height="60" class="b-pad"/></g>
                <g id="tht"><circle r="42" class="b-dark"/><circle r="31" class="b-gold"/><circle r="15" class="b-hole"/><path d="M-12-7A15 15 0 0 0 -8 13A17 17 0 0 1 -12-7z" class="b-black"/></g>
                <g id="tht-s"><circle r="35" class="b-dark"/><circle r="22" class="b-gold"/><circle r="15" class="b-hole"/><path d="M-13-8A15 15 0 0 0 -8 13A17 17 0 0 1 -13-8z" class="b-black"/></g>
                <g id="oval"><rect x="-63" y="-45" width="127" height="90" rx="12" class="b-dark"/><rect x="-49" y="-31" width="98" height="62" class="b-gold"/><rect x="-43" y="-24" width="86" height="46" rx="23" class="b-black"/><rect x="-40" y="-24" width="83" height="42" rx="21" class="b-hole"/></g>
                <g id="via-b"><circle r="14" class="b-dark"/><circle r="4" class="b-black"/></g>
              </defs>
              <path class="b-body" d="M120 36H1455Q1534 36 1536 110L1550 1700Q1550 1782 1465 1782H110Q36 1782 36 1700L38 110Q38 36 120 36z"/>
              <use href="#tracks" class="tr-o"/>
              <use href="#tracks" class="tr-i2"/>
              <rect x="750" y="165" width="75" height="170" rx="10" class="b-dark"/>
              <rect x="400" y="512" width="170" height="78" rx="10" class="b-dark"/>
              <use href="#led" transform="translate(525 703) rotate(-31)"/>
              <use href="#led" transform="translate(485 551)"/>
              <use href="#led" transform="translate(525 400) rotate(30)"/>
              <use href="#led" transform="translate(637 288) rotate(60)"/>
              <use href="#led" transform="translate(787 250) rotate(90)"/>
              <use href="#led" transform="translate(938 288) rotate(-60)"/>
              <use href="#led" transform="translate(1050 398) rotate(-30)"/>
              <use href="#led" transform="translate(1091 551)"/>
              <use href="#led" transform="translate(1050 701) rotate(30)"/>
              <use href="#via-b" transform="translate(1030 299)"/>
              <use href="#via-b" transform="translate(1038 935)"/>
              <path class="b-silk" d="M897 1077A40 40 0 0 0 858 1117V1580A40 40 0 0 0 897 1620M985 1077H1065M1138 1077H1220M1293 1077H1375M1458 1077A40 40 0 0 1 1498 1117V1580A40 40 0 0 1 1462 1620M985 1620H1065M1140 1620H1222M1295 1620H1378M1500 1210H1547V1485H1500"/>
              <path class="b-silk" d="M232 1183H105V1545H232M352 1183H478V1540H352"/>
              <circle cx="290" cy="1363" r="92" class="b-silk"/>
              <path class="b-silk" d="M273 1363H308M290 1346V1381"/>
              <use href="#pinp" transform="translate(947 1065)"/><use href="#pinp" transform="translate(1100 1065)"/><use href="#pinp" transform="translate(1255 1065)"/><use href="#pinp" transform="translate(1410 1065)"/>
              <use href="#pinp" transform="translate(1023 1165)"/><use href="#pinp" transform="translate(1178 1165)"/><use href="#pinp" transform="translate(1333 1165)"/>
              <use href="#pinp" transform="translate(1025 1530)"/><use href="#pinp" transform="translate(1180 1530)"/><use href="#pinp" transform="translate(1335 1530)"/>
              <use href="#pinp" transform="translate(947 1630)"/><use href="#pinp" transform="translate(1103 1630)"/><use href="#pinp" transform="translate(1257 1630)"/><use href="#pinp" transform="translate(1413 1630)"/>
              <use href="#oval" transform="translate(291 1193)"/>
              <use href="#oval" transform="translate(291 1535)"/>
              <use href="#tht-s" transform="translate(80 1285)"/>
              <use href="#tht-s" transform="translate(78 1440)"/>
              <use href="#tht" transform="translate(520 1285)"/>
              <use href="#tht" transform="translate(520 1362)"/>
              <rect x="477" y="1396" width="88" height="88" rx="12" class="b-dark"/>
              <rect x="489" y="1409" width="62" height="62" class="b-gold"/>
              <circle cx="520" cy="1440" r="15" class="b-hole"/>
              <path d="M509 1490h22l-11-10z" class="b-silk"/>
              <text class="b-txt" transform="translate(555 750) rotate(-30)">D1</text>
              <text class="b-txt" transform="translate(485 607)">D2</text>
              <text class="b-txt" transform="translate(497 447) rotate(30)">D3</text>
              <text class="b-txt" transform="translate(585 318) rotate(60)">D4</text>
              <text class="b-txt" transform="translate(732 250) rotate(-90)">D5</text>
              <text class="b-txt" transform="translate(890 262) rotate(-60)">D6</text>
              <text class="b-txt" transform="translate(1020 350) rotate(-30)">D7</text>
              <text class="b-txt" transform="translate(1092 493)">D8</text>
              <text class="b-txt" transform="translate(1080 652) rotate(30)">D9</text>
              <text class="b-txt" transform="translate(433 1583)">SW1</text>
              <text class="b-txt" transform="translate(1247 1348) rotate(90)">M1</text>
            </svg>
            <svg class="axis" viewBox="0 0 50 50">
              <path d="M6.700 17H14V30H6.700z" fill="#0c0"/>
              <path d="M10 4L3 18H17z" fill="#0e0"/>
              <path d="M19 32H30V41H19z" fill="#f11"/>
              <path d="M27 29L43 36 27 43z" fill="#e00"/>
              <circle cx="10" cy="36.500" r="9" fill="#00009a"/>
            </svg>
          </div>
          <aside class="v-panel">
            <div class="v-phead">Appearance</div>
            <div class="v-pscroll">
              <div class="v-plist">
                <div class="vr"><i class="sw sw-blk"></i><svg class="eye"><use href="#eye"/></svg>Board Body</div>
                <div class="vr"><i class="sw sw-cu"></i><svg class="eye"><use href="#eye"/></svg>F.Cu</div>
                <div class="vr"><i class="sw sw-cu"></i><svg class="eye"><use href="#eye"/></svg>B.Cu</div>
                <div class="vr"><i class="sw"></i><svg class="eye"><use href="#eye"/></svg>Adhesive</div>
                <div class="vr"><i class="sw sw-pst"></i><svg class="eye"><use href="#eye"/></svg>Solder Paste</div>
                <div class="vr"><i class="sw sw-sk"></i><svg class="eye"><use href="#eye"/></svg>F.Silkscreen</div>
                <div class="vr"><i class="sw sw-sk"></i><svg class="eye"><use href="#eye"/></svg>B.Silkscreen</div>
                <div class="vr"><i class="sw sw-msk"></i><svg class="eye"><use href="#eye"/></svg>F.Mask</div>
                <div class="vr"><i class="sw sw-msk"></i><svg class="eye"><use href="#eye"/></svg>B.Mask</div>
                <div class="vr"><i class="sw sw-dw"></i><svg class="eye"><use href="#eye"/></svg>User.Drawings</div>
                <div class="vr"><i class="sw sw-cm"></i><svg class="eye"><use href="#eye"/></svg>User.Comments</div>
                <div class="vr"><i class="sw sw-e1"></i><svg class="eye"><use href="#eye"/></svg>User.Eco1</div>
                <div class="vr"><i class="sw sw-e2"></i><svg class="eye"><use href="#eye"/></svg>User.Eco2</div>
                <div class="vr gap"><i class="sw"></i><svg class="eye"><use href="#eye"/></svg>Through-hole Models</div>
                <div class="vr"><i class="sw"></i><svg class="eye"><use href="#eye"/></svg>SMD Models</div>
                <div class="vr"><i class="sw"></i><svg class="eye"><use href="#eye"/></svg>Virtual Models</div>
                <div class="vr"><i class="sw"></i><svg class="eye"><use href="#eye"/></svg>Models not in POS File</div>
                <div class="vr"><i class="sw"></i><svg class="eye"><use href="#eyeoff"/></svg>Models marked DNP</div>
                <div class="vr"><i class="sw"></i><svg class="eye"><use href="#eyeoff"/></svg>Model Bounding Boxes</div>
                <div class="vr gap"><i class="sw"></i><svg class="eye"><use href="#eye"/></svg>Values</div>
                <div class="vr"><i class="sw"></i><svg class="eye"><use href="#eye"/></svg>References</div>
                <div class="vr"><i class="sw"></i><svg class="eye"><use href="#eye"/></svg>Footprint Text</div>
                <div class="vr"><i class="sw"></i><svg class="eye"><use href="#eyeoff"/></svg>Off-board Silkscreen</div>
                <div class="vr gap"><i class="sw"></i><svg class="eye"><use href="#eye"/></svg>3D Axis</div>
                <div class="vr vr-bg"><i class="sw sw-bgs"></i>Background Start</div>
                <div class="vr vr-bg"><i class="sw sw-bge"></i>Background End</div>
              </div>
              <div class="v-scroll">
                <svg class="up"><use href="#chev"/></svg>
                <div class="thumb"></div>
                <svg><use href="#chev"/></svg>
              </div>
            </div>
            <div class="v-presets">
              <label>Presets (Ctrl+Tab):</label>
              <div class="sel sel-p">Follow PCB Editor<svg><use href="#chev"/></svg></div>
              <label>Viewports (Shift+Tab):</label>
              <div class="sel sel-p sel-p2">---<svg><use href="#chev"/></svg></div>
            </div>
          </aside>
        </div>
        <footer class="v-status">
          <span class="vs1">Last render time 1 ms</span><span class="vs2"></span><span class="vs3">dx 0.00</span><span class="vs3">dy 0.00</span><span class="vs4">zoom 1.00</span>
          <i class="grip"></i>
        </footer>
      </section>
    </div>

    <div class="vbar right-bar">
      <span class="b on"><svg class="ic"><use href="#pointer"/></svg></span>
      <span class="b"><svg class="ic"><use href="#xhair"/></svg></span><span class="s"></span>
      <span class="b"><svg class="ic"><use href="#fp"/></svg></span>
      <span class="b"><svg class="ic"><use href="#route"/></svg></span>
      <span class="b"><svg class="ic"><use href="#mean"/></svg></span>
      <span class="b"><svg class="ic"><use href="#via"/></svg></span>
      <span class="b"><svg class="ic"><use href="#zonepad"/></svg></span>
      <span class="b"><svg class="ic"><use href="#hatch"/></svg></span><span class="s"></span>
      <span class="b"><svg class="ic"><use href="#line"/></svg></span>
      <span class="b"><svg class="ic"><use href="#arc"/></svg></span>
      <span class="b"><svg class="ic"><use href="#rect"/></svg></span>
      <span class="b"><svg class="ic"><use href="#circ"/></svg></span>
      <span class="b"><svg class="ic"><use href="#poly"/></svg></span>
      <span class="b"><svg class="ic"><use href="#img"/></svg></span>
      <span class="b"><svg class="ic"><use href="#txt"/></svg></span>
      <span class="b"><svg class="ic"><use href="#tbox"/></svg></span>
      <span class="b"><svg class="ic"><use href="#dim"/></svg></span>
      <span class="b"><svg class="ic"><use href="#del"/></svg></span><span class="s"></span>
      <span class="b"><svg class="ic"><use href="#gridor"/></svg></span>
      <span class="b"><svg class="ic"><use href="#ruler"/></svg></span>
    </div>

    <aside class="panel">
      <div class="p-head">Appearance</div>
      <div class="tabs"><span class="tab on">Layers</span><span class="tab">Objects</span><span class="tab">Nets</span></div>
      <div class="tabbody">
        <div class="layers">
          <div class="lr cur"><b class="arrow"></b><i class="sw sw-fcu"></i><svg class="eye"><use href="#eye"/></svg>F.Cu</div>
          <div class="lr"><i class="sw sw-bcu"></i><svg class="eye"><use href="#eye"/></svg>B.Cu</div>
          <div class="lr"><i class="sw sw-fad"></i><svg class="eye"><use href="#eye"/></svg>F.Adhesive</div>
          <div class="lr"><i class="sw sw-bad"></i><svg class="eye"><use href="#eye"/></svg>B.Adhesive</div>
          <div class="lr"><i class="sw sw-fp"></i><svg class="eye"><use href="#eye"/></svg>F.Paste</div>
          <div class="lr"><i class="sw sw-bp"></i><svg class="eye"><use href="#eye"/></svg>B.Paste</div>
          <div class="lr"><i class="sw sw-fs"></i><svg class="eye"><use href="#eye"/></svg>F.Silkscreen</div>
          <div class="lr"><i class="sw sw-bs"></i><svg class="eye"><use href="#eye"/></svg>B.Silkscreen</div>
          <div class="lr"><i class="sw sw-fm"></i><svg class="eye"><use href="#eye"/></svg>F.Mask</div>
          <div class="lr"><i class="sw sw-bm"></i><svg class="eye"><use href="#eye"/></svg>B.Mask</div>
          <div class="lr"><i class="sw sw-dw"></i><svg class="eye"><use href="#eye"/></svg>User.Drawings</div>
          <div class="lr"><i class="sw sw-cm"></i><svg class="eye"><use href="#eye"/></svg>User.Comments</div>
          <div class="lr"><i class="sw sw-e1"></i><svg class="eye"><use href="#eye"/></svg>User.Eco1</div>
          <div class="lr"><i class="sw sw-e2"></i><svg class="eye"><use href="#eye"/></svg>User.Eco2</div>
          <div class="lr"><i class="sw sw-ec"></i><svg class="eye"><use href="#eye"/></svg>Edge.Cuts</div>
          <div class="lr"><i class="sw sw-mg"></i><svg class="eye"><use href="#eye"/></svg>Margin</div>
          <div class="lr"><i class="sw sw-mg"></i><svg class="eye"><use href="#eye"/></svg>F.Courtyard</div>
          <div class="lr"><i class="sw sw-bc"></i><svg class="eye"><use href="#eye"/></svg>B.Courtyard</div>
          <div class="lr"><i class="sw sw-ff"></i><svg class="eye"><use href="#eye"/></svg>F.Fab</div>
          <div class="lr"><i class="sw sw-bf"></i><svg class="eye"><use href="#eye"/></svg>B.Fab</div>
          <div class="lr"><i class="sw sw-dw"></i><svg class="eye"><use href="#eye"/></svg>User.1</div>
          <div class="lr"><i class="sw sw-cm"></i><svg class="eye"><use href="#eye"/></svg>User.2</div>
          <div class="lr"><i class="sw sw-e1"></i><svg class="eye"><use href="#eye"/></svg>User.3</div>
          <div class="lr"><i class="sw sw-e2"></i><svg class="eye"><use href="#eye"/></svg>User.4</div>
          <div class="lr"><i class="sw sw-dw"></i><svg class="eye"><use href="#eye"/></svg>User.5</div>
          <div class="lr"><i class="sw sw-cm"></i><svg class="eye"><use href="#eye"/></svg>User.6</div>
          <div class="lr"><i class="sw sw-e1"></i><svg class="eye"><use href="#eye"/></svg>User.7</div>
          <div class="lr"><i class="sw sw-e2"></i><svg class="eye"><use href="#eye"/></svg>User.8</div>
          <div class="lr"><i class="sw sw-bs"></i><svg class="eye"><use href="#eye"/></svg>User.9</div>
        </div>
        <div class="opts"><b class="opts-arrow"></b>Layer Display Options</div>
      </div>
      <div class="presets">
        <label>Presets (Ctrl+Tab):</label>
        <div class="sel sel-r">All Layers<svg><use href="#chev"/></svg></div>
        <label>Viewports (Shift+Tab):</label>
        <div class="sel sel-r sel-r2">---<svg><use href="#chev"/></svg></div>
      </div>
      <div class="p-head p-head2">Selection Filter</div>
      <div class="filter">
        <label><i class="cb on"></i>All items</label><label><i class="cb"></i>Locked items</label>
        <label><i class="cb on"></i>Footprints</label><label><i class="cb on"></i>Text</label>
        <label><i class="cb on"></i>Tracks</label><label><i class="cb on"></i>Vias</label>
        <label><i class="cb on"></i>Pads</label><label><i class="cb on"></i>Graphics</label>
        <label><i class="cb on"></i>Zones</label><label><i class="cb on"></i>Rule Areas</label>
        <label><i class="cb on"></i>Dimensions</label><label><i class="cb on"></i>Other items</label>
      </div>
    </aside>
  </div>

  <div class="msg">
    <div class="m-col m1"><span>Pads</span><span>39</span></div>
    <div class="m-col m2"><span>Vias</span><span>2</span></div>
    <div class="m-col m3"><span>Track Segments</span><span>100</span></div>
    <div class="m-col m4"><span>Nets</span><span>14</span></div>
    <div class="m-col m5"><span>Unrouted</span><span>0</span></div>
  </div>
  <footer class="status">
    <span class="st st1">File 'C:\Users\thanh\Desktop\DigitalFabrication\Potshead\_autosave-Potshead.kicad_pcb' saved.</span>
    <span class="st st2">Z 2.72</span>
    <span class="st st3">X 68.0000&nbsp; Y 37.0000</span>
    <span class="st st4">dx 68.0000&nbsp; dy 37.0000&nbsp; dist 77.4145</span>
    <span class="st st5">grid 1.0000</span>
    <span class="st st6"></span>
    <span class="st st7">mm</span>
    <span class="st st8">Select item(s)</span>
  </footer>
</div>
</body>
</html>
```
FILE: styles.css
```css
* { box-sizing: border-box; }
html, body { margin: 0; height: 100%; overflow: hidden; }
body { font: 12.5px "Liberation Sans", Arial, sans-serif; color: #111; background: #efefef; }
i, b { font-style: normal; font-weight: normal; }
.defs { position: absolute; }
.app { display: flex; flex-direction: column; width: 1920px; height: 1080px; }

/* windows taskbar */
.taskbar { height: 30px; flex: none; display: flex; align-items: center; color: #fff; background: linear-gradient(100deg, #2a2a2a 0%, #343434 50%, #2b2b2b 85%, #3d3d3d 93%, #262626 100%); }
.tb-start { width: 18px; height: 18px; margin-left: 9px; }
.tb-search { width: 17px; height: 17px; margin-left: 20px; }
.tb-apps { display: flex; margin-left: 545px; height: 30px; }
.tb-app { width: 37px; height: 30px; display: flex; align-items: center; justify-content: center; }
.tb-app svg { width: 18px; height: 18px; }
.tb-app.on { box-shadow: inset 0 2px 0 #ffe680; }
.tray { position: relative; display: flex; align-items: center; margin-left: 290px; height: 30px; flex: 1; }
.tr-i { width: 16px; height: 16px; flex: none; }
.w-chv { width: 14px; margin-right: 11px; }
.w-wifi { margin-right: 6px; }
.w-bat { margin-right: 7px; }
.w-mute { margin-right: 9px; }
.w-bright { margin-right: 11px; }
.w-pen { margin-right: 13px; }
.tr-eng { font-size: 12.5px; width: 40px; color: #eee; }
.tr-time { font-size: 12.5px; width: 86px; color: #eee; white-space: nowrap; }
.w-note { margin-right: 0; }

/* title + menu */
.titlebar { height: 22px; flex: none; background: #fff; display: flex; align-items: center; padding: 1px 0 0 2px; color: #8a8a8a; }
.app-icon { width: 16px; height: 16px; }
.title-text { margin-left: 5px; font-size: 12.5px; }
.win-btns { margin-left: auto; display: flex; gap: 33px; padding-right: 19px; color: #999; }
.win-btns svg { width: 12px; height: 12px; }
.menubar { height: 19px; flex: none; background: #fff; display: flex; align-items: center; padding: 1px 0 0 6px; color: #555; font-size: 12.5px; }
.menubar span { margin-right: 13.700px; }

/* shared toolbar buttons */
.b { width: 32px; height: 32px; padding: 1px; display: flex; align-items: center; justify-content: center; flex: none; }
.b.on { background: #b5d7f3; background-clip: content-box; outline: 1px solid #0a7fd8; outline-offset: -2px; }
.ic { width: 24px; height: 24px; display: block; }
.hbar { display: flex; align-items: center; }
.hbar .s { width: 1px; height: 26px; background: #9a9a9a; margin: 0 4px 0 3px; flex: none; }
.vbar { display: flex; flex-direction: column; flex: none; background: #efefef; padding-top: 4px; }
.vbar .s { display: block; height: 1px; background: #9a9a9a; margin: 4px 4px 3px; flex: none; }
.it { font-family: "Liberation Sans", Arial, sans-serif; fill: #4d4d4d; stroke: none; }
.it-find { font-size: 11px; font-weight: bold; text-anchor: middle; }
.it-s { font-size: 10px; }
.it-i { font-style: italic; }
.it-u { font-size: 9.500px; text-anchor: middle; font-family: "DejaVu Sans", sans-serif; }
.it-a { font-size: 8px; }
.it-ki { font-size: 14px; font-weight: bold; fill: #fff; text-anchor: middle; }

.toolbar { height: 70px; flex: none; background: #efefef; }
.tbar-row { height: 36px; padding: 1px 0 0 4px; }
.tbar-row2 { height: 34px; display: flex; align-items: center; padding-left: 6px; }
.sel { display: flex; align-items: center; justify-content: space-between; height: 23px; padding: 0 3px 0 4px; background: #e1e1e1; border: 1px solid #adadad; font-size: 12.500px; color: #111; white-space: nowrap; flex: none; }
.sel svg { width: 10px; height: 6px; flex: none; }
.sel-track { width: 165px; padding-left: 2px; }
.b-track { margin: 0 0 0 2px; width: 32px; }
.s2 { width: 1px; height: 26px; background: #9a9a9a; flex: none; }
.b-track + .s2 { margin: 0 5px 0 2px; }
.sel-via { width: 157px; }
.sel-via + .s2 { margin: 0 6px 0 5px; }
.sel-layer { width: 144px; background: #fff; justify-content: flex-start; border-color: #8f8f8f; }
.layer-sw { width: 13px; height: 13px; background: #c83434; border: 1px solid #999; flex: none; margin: 0 5px 0 2px; }
.layer-name { flex: 1; }
.pair { width: 24px; height: 24px; margin-left: 5px; flex: none; background: #fff; }
.pair + .s2 { margin: 0 7px 0 4px; }
.sel-grid { width: 212px; }
.sel-grid + .s2 { margin: 0 5px 0 4px; }
.sel-zoom { width: 101px; }

/* main area */
.main { flex: 1; display: flex; min-height: 0; }
.left-bar { width: 34px; }
.canvas { flex: none; width: 1667px; position: relative; background-color: #001023; background-image: radial-gradient(circle, #6d7a88 0.45px, transparent 0.7px); background-size: 98px 98px; background-position: -13px -13px; border-top: 1px solid #9a9a9a; border-left: 1px solid #9a9a9a; }
.xh { position: absolute; background: #b5b5b5; }
.xh-v { left: 508px; top: 0; width: 1px; height: 46px; }
.xh-h { left: 468px; top: 5px; width: 78px; height: 1px; }
.right-bar { width: 37px; padding-left: 2px; border-right: 3px solid #dcdcdc; }
.panel { flex: none; width: 182px; display: flex; flex-direction: column; background: #efefef; padding-left: 2px; }
.p-head { height: 21px; flex: none; background: #b5b5b5; display: flex; align-items: center; padding-left: 3px; font-size: 12.500px; color: #111; }
.tabs { margin-top: 5px; height: 23px; display: flex; flex: none; align-items: flex-end; padding-left: 1px; }
.tab { height: 21px; padding: 0 5px; display: flex; align-items: center; border: 1px solid #d9d9d9; border-bottom: 0; border-left: 0; width: 52px; justify-content: center; }
.tab.on { height: 23px; width: 51px; background: #fff; border-left: 1px solid #d9d9d9; }
.tab:last-child { width: 40px; }
.tabbody { width: 177px; height: 610px; background: #fff; border: 1px solid #dcdcdc; border-top: 0; flex: none; padding: 1px 0 0 4px; }
.layers { width: 172px; height: 583px; background: #efefef; }
.lr { height: 18px; display: flex; align-items: center; position: relative; padding-left: 16px; white-space: nowrap; font-size: 11px; }
.lr .eye { margin-left: 6px; }
.lr.cur { background: #e0e0e0; }
.arrow { position: absolute; left: 6px; top: 4px; border-left: 5px solid #3a3aff; border-top: 5px solid transparent; border-bottom: 5px solid transparent; }
.sw { width: 14px; height: 12px; flex: none; display: block; }
.eye { width: 16px; height: 16px; margin: 0 5px; flex: none; }
.opts { height: 26px; display: flex; align-items: center; padding-left: 11px; color: #777; font-size: 11px; }
.opts-arrow { border-left: 5px solid #555; border-top: 4px solid transparent; border-bottom: 4px solid transparent; margin-right: 2px; }
.presets { padding: 8px 0 0 7px; height: 106px; flex: none; font-size: 11.500px; }
.presets label { display: block; height: 19px; line-height: 16px; }
.sel-r { width: 166px; height: 22px; margin-bottom: 3px; padding-left: 3px; }
.sel-r2 { height: 23px; }
.p-head2 { background: #b9b9b9; }
.filter { display: grid; grid-template-columns: 86px 1fr; grid-auto-rows: 15px; padding: 4px 0 0 5px; font-size: 10.800px; }
.filter label { display: flex; align-items: center; white-space: nowrap; }
.cb { width: 12px; height: 12px; border: 1px solid #333; background: #fff; margin-right: 4px; position: relative; flex: none; }
.cb.on::after { content: ""; position: absolute; left: 1.500px; top: 0; width: 7px; height: 4px; border-left: 1px solid #333; border-bottom: 1px solid #333; transform: rotate(-45deg) translate(-1px, 2px); }

.sw-fcu { background: #c83434; } .sw-bcu { background: #4d7fc4; } .sw-fad { background: #840084; } .sw-bad { background: #000084; }
.sw-fp { background: #a49186; } .sw-bp { background: #00a69b; } .sw-fs { background: #f2eda1; } .sw-bs { background: #e8b2a7; }
.sw-fm { background: #6d3a75; } .sw-bm { background: #0b6d60; } .sw-dw { background: #c2c2c2; } .sw-cm { background: #5994dc; }
.sw-e1 { background: #b4dbd2; } .sw-e2 { background: #d8c852; } .sw-ec { background: #d0d2cd; } .sw-mg { background: #ff26e2; }
.sw-bc { background: #26e9ff; } .sw-ff { background: #afafaf; } .sw-bf { background: #585d84; }
.sw-blk { background: #000; } .sw-cu { background: #bf9f3f; } .sw-pst { background: #808080; } .sw-sk { background: #f4f4f4; }
.sw-msk { background: #2e4d3c; } .sw-bgs { background: #cccce6; } .sw-bge { background: #66667f; }

/* 3D viewer window */
.viewer { position: absolute; left: 293px; top: 54px; width: 1264px; height: 711px; display: flex; flex-direction: column; background: #efefef; }
.v-title { height: 29px; flex: none; background: #fff; display: flex; align-items: center; padding: 1px 0 0 11px; color: #111; font-size: 12.500px; }
.v-app { width: 12px; height: 16px; margin-right: 6px; }
.v-btns { margin-left: auto; display: flex; gap: 33px; padding-right: 18px; color: #000; }
.v-btns svg { width: 12px; height: 12px; }
.v-menu { height: 21px; flex: none; background: #fff; display: flex; align-items: center; padding: 1px 0 0 7px; font-size: 12.500px; }
.v-menu span { margin-right: 13px; }
.v-tools { height: 34px; flex: none; padding: 1px 0 0 4px; background: #efefef; border-bottom: 2px solid #a9a9a9; }
.v-body { height: 603px; flex: none; display: flex; }
.v-view { width: 1072px; position: relative; overflow: hidden; background: linear-gradient(#cccce6, #66667f); }
.board { position: absolute; left: 272px; top: 0; width: 520px; height: 610px; }
.axis { position: absolute; left: 32px; bottom: 28px; width: 50px; height: 50px; }
.b-body { fill: #426542; stroke: #1b4230; stroke-width: 16; }
.tr-o, .tr-i2 { fill: none; stroke-linejoin: round; stroke-linecap: round; }
.tr-o { stroke: #1b4230; stroke-width: 36; }
.tr-i2 { stroke: #426542; stroke-width: 12; }
.b-dark { fill: #1b4230; }
.b-pad { fill: #e6e6e6; }
.b-silk { fill: none; stroke: #e6e6e6; stroke-width: 3.500; }
.b-gold { fill: #f4f0a4; }
.b-hole { fill: #6e6e88; }
.b-black { fill: #1a1508; }
.b-txt { font: 42px "DejaVu Sans", sans-serif; fill: #e6e6e6; text-anchor: middle; dominant-baseline: central; }

.v-panel { width: 192px; flex: none; margin-left: 0; padding-left: 2px; display: flex; flex-direction: column; background: #efefef; }
.v-phead { height: 21px; flex: none; background: #b5b5b5; display: flex; align-items: center; padding-left: 3px; }
.v-pscroll { height: 484px; flex: none; display: flex; overflow: hidden; }
.v-plist { flex: 1; background: #fff; padding-top: 3px; overflow: hidden; font-size: 11px; }
.vr { height: 18px; display: flex; align-items: center; padding-left: 5px; white-space: nowrap; }
.vr.gap { margin-top: 9px; }
.vr .sw { width: 14px; height: 12px; }
.vr .eye { margin: 0 5px; }
.vr-bg .sw { margin-right: 24px; }
.v-scroll { width: 16px; flex: none; display: flex; flex-direction: column; align-items: center; background: #f0f0f0; padding-top: 7px; }
.v-scroll svg { width: 9px; height: 6px; flex: none; }
.v-scroll .up { transform: rotate(180deg); margin-bottom: 4px; }
.thumb { width: 16px; height: 437px; background: #cdcdcd; margin-bottom: 20px; }
.v-presets { padding: 7px 0 0 7px; font-size: 11.500px; }
.v-presets label { display: block; height: 19px; line-height: 16px; }
.sel-p { width: 175px; height: 22px; margin-bottom: 3px; }
.sel-p2 { height: 23px; }
.v-status { position: relative; flex: 1; display: flex; align-items: center; background: #efefef; border-top: 1px solid #d0d0d0; padding: 1px 0 0 2px; }
.vs1 { width: 644px; }
.vs2 { width: 184px; height: 100%; border-left: 1px solid #d9d9d9; }
.vs3 { width: 139px; }
.vs4 { border-left: 1px solid #d9d9d9; height: 100%; display: flex; align-items: center; padding-left: 5px; margin-left: -5px; }
.grip { position: absolute; right: 1px; bottom: 1px; width: 9px; height: 9px; background-image: radial-gradient(circle, #aaa 1px, transparent 1.200px); background-size: 3px 3px; }

/* bottom */
.msg { height: 31px; flex: none; display: flex; background: #efefef; color: #6e6e6e; font-size: 12px; padding-top: 2px; border-bottom: 1px solid #d4d4d4; }
.m-col { display: flex; flex-direction: column; line-height: 15px; white-space: nowrap; }
.m1 { margin-left: 11px; width: 57px; }
.m2 { width: 54px; }
.m3 { width: 119px; }
.m4 { width: 55px; }
.status { height: 23px; flex: none; display: flex; background: #efefef; font-size: 12.350px; color: #111; }
.st { display: flex; align-items: center; height: 100%; white-space: nowrap; border-left: 1px solid #d9d9d9; padding-left: 4px; flex: none; }
.st1 { width: 808px; border-left: 0; padding-left: 2px; }
.st2 { width: 80px; }
.st3 { width: 173px; }
.st4 { width: 273px; }
.st5 { width: 170px; }
.st6 { width: 22px; }
.st7 { width: 62px; }
.st8 { flex: 1; }
```
